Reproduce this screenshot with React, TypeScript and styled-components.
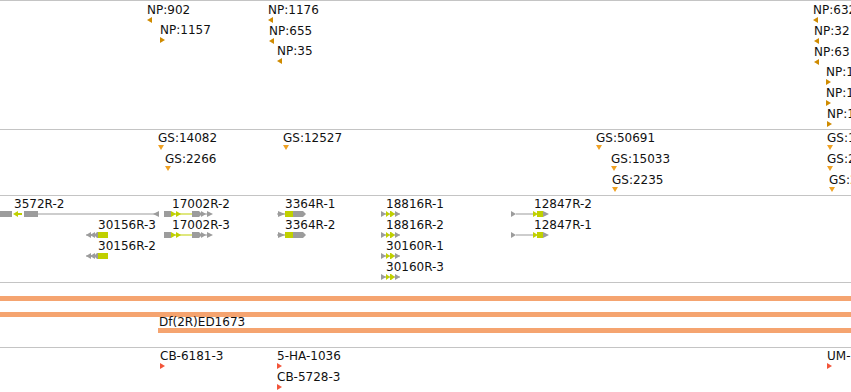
import React from 'react';
import styled, { createGlobalStyle } from 'styled-components';

const GRAY = '#9c9c9c';
const LIME = '#c0d000';
const NP_COLOR = '#cf8b00';
const GS_COLOR = '#f0a224';
const CB_COLOR = '#f2553a';
const BAR_COLOR = '#f5a470';

const GlobalStyle = createGlobalStyle`
  html, body {
    margin: 0;
    padding: 0;
    background: #ffffff;
  }
  body {
    font-family: "DejaVu Sans", "Liberation Sans", sans-serif;
    overflow: hidden;
  }
`;

const Browser = styled.div`
  width: 851px;
  height: 392px;
  overflow: hidden;
  border-top: 1px solid #c4c4c4;
  box-sizing: border-box;
  display: flex;
  flex-direction: column;
`;

const Track = styled.div<{ $h: number }>`
  position: relative;
  flex: none;
  height: ${p => p.$h}px;
  border-bottom: 1px solid #c4c4c4;
  overflow: hidden;
`;

const Feature = styled.div<{ $x: number; $y: number }>`
  position: absolute;
  left: ${p => p.$x}px;
  top: ${p => p.$y}px;
  display: flex;
  flex-direction: column;
  align-items: flex-start;
`;

const Label = styled.div<{ $dx?: number }>`
  margin-left: ${p => p.$dx || 0}px;
  font-size: 12px;
  line-height: 14px;
  color: #111111;
  white-space: nowrap;
`;

const Bar = styled.div<{ $w: number; $gap?: number }>`
  width: ${p => p.$w}px;
  height: 5px;
  margin-top: ${p => p.$gap || 0}px;
  background: ${BAR_COLOR};
`;

type Dir = 'left' | 'right' | 'down';

const Marker = ({ dir, color }: { dir: Dir; color: string }) => {
  if (dir === 'down') {
    return (
      <svg width="6" height="5" style={{ display: 'block' }}>
        <polygon points="0,0 6,0 3,5" fill={color} />
      </svg>
    );
  }
  const pts = dir === 'left' ? '5,0 0,3 5,6' : '0,0 5,3 0,6';
  return (
    <svg width="5" height="6" style={{ display: 'block' }}>
      <polygon points={pts} fill={color} />
    </svg>
  );
};

type Part = { t: 'box' | 'mid' | 'thin' | 'r' | 'l' | 'ra' | 'la'; a: number; b: number; c: string };

const GeneGlyph = ({ w, parts }: { w: number; parts: Part[] }) => (
  <svg width={w} height="6" style={{ display: 'block' }}>
    {parts.map((p, i) => {
      switch (p.t) {
        case 'box':
          return <rect key={i} x={p.a} y={0} width={p.b - p.a} height={6} fill={p.c} />;
        case 'mid':
          return <rect key={i} x={p.a} y={2} width={p.b - p.a} height={2} fill={p.c} />;
        case 'thin':
          return <rect key={i} x={p.a} y={2.5} width={p.b - p.a} height={1} fill={p.c} />;
        case 'r':
          return <polygon key={i} points={`${p.a},0 ${p.b},3 ${p.a},6`} fill={p.c} />;
        case 'l':
          return <polygon key={i} points={`${p.b},0 ${p.a},3 ${p.b},6`} fill={p.c} />;
        case 'ra':
          return <polygon key={i} points={`${p.a},0 ${p.b - 3},0 ${p.b},3 ${p.b - 3},6 ${p.a},6`} fill={p.c} />;
        case 'la':
          return <polygon key={i} points={`${p.a + 3},0 ${p.b},0 ${p.b},6 ${p.a + 3},6 ${p.a},3`} fill={p.c} />;
        default:
          return null;
      }
    })}
  </svg>
);

type Point = { name: string; x: number; y: number; dir: Dir };

const npFeatures: Point[] = [
  { name: 'NP:902', x: 147, y: 2, dir: 'left' },
  { name: 'NP:1157', x: 160, y: 22, dir: 'right' },
  { name: 'NP:1176', x: 268, y: 2, dir: 'left' },
  { name: 'NP:655', x: 269, y: 23, dir: 'left' },
  { name: 'NP:35', x: 277, y: 43, dir: 'left' },
  { name: 'NP:6327', x: 813, y: 2, dir: 'left' },
  { name: 'NP:32', x: 814, y: 23, dir: 'left' },
  { name: 'NP:63', x: 814, y: 44, dir: 'left' },
  { name: 'NP:1048', x: 826, y: 64, dir: 'right' },
  { name: 'NP:1122', x: 826, y: 85, dir: 'right' },
  { name: 'NP:1390', x: 827, y: 106, dir: 'right' },
];

const gsFeatures: Point[] = [
  { name: 'GS:14082', x: 158, y: 1, dir: 'down' },
  { name: 'GS:2266', x: 165, y: 22, dir: 'down' },
  { name: 'GS:12527', x: 283, y: 1, dir: 'down' },
  { name: 'GS:50691', x: 596, y: 1, dir: 'down' },
  { name: 'GS:15033', x: 611, y: 22, dir: 'down' },
  { name: 'GS:2235', x: 612, y: 43, dir: 'down' },
  { name: 'GS:1418', x: 827, y: 1, dir: 'down' },
  { name: 'GS:2071', x: 827, y: 22, dir: 'down' },
  { name: 'GS:2540', x: 829, y: 43, dir: 'down' },
];

const cbFeatures: Point[] = [
  { name: 'CB-6181-3', x: 160, y: 1, dir: 'right' },
  { name: '5-HA-1036', x: 277, y: 1, dir: 'right' },
  { name: 'CB-5728-3', x: 277, y: 22, dir: 'right' },
  { name: 'UM-2168', x: 827, y: 1, dir: 'right' },
];

const G = GRAY;
const Y = LIME;

const glyph3572: Part[] = [
  { t: 'box', a: 0, b: 12, c: G },
  { t: 'mid', a: 16, b: 22, c: Y },
  { t: 'l', a: 13, b: 18, c: Y },
  { t: 'box', a: 24, b: 38, c: G },
  { t: 'thin', a: 38, b: 155, c: G },
  { t: 'l', a: 153, b: 159, c: G },
];

const glyph17002: Part[] = [
  { t: 'box', a: 0, b: 7, c: G },
  { t: 'thin', a: 7, b: 28, c: Y },
  { t: 'r', a: 7, b: 12, c: Y },
  { t: 'r', a: 12, b: 17, c: Y },
  { t: 'ra', a: 28, b: 38, c: G },
  { t: 'thin', a: 37, b: 44, c: G },
  { t: 'r', a: 37, b: 42, c: G },
  { t: 'r', a: 43, b: 49, c: G },
];

const glyph30156: Part[] = [
  { t: 'thin', a: 0, b: 12, c: G },
  { t: 'l', a: 0, b: 5, c: G },
  { t: 'l', a: 4, b: 9, c: G },
  { t: 'la', a: 8, b: 13, c: G },
  { t: 'box', a: 12, b: 22, c: Y },
];

const glyph3364: Part[] = [
  { t: 'thin', a: 0, b: 8, c: G },
  { t: 'r', a: 1, b: 8, c: G },
  { t: 'box', a: 8, b: 16, c: Y },
  { t: 'ra', a: 16, b: 29, c: G },
];

const glyph18816: Part[] = [
  { t: 'thin', a: 0, b: 19, c: G },
  { t: 'r', a: 0, b: 5, c: G },
  { t: 'r', a: 5, b: 9, c: Y },
  { t: 'box', a: 9, b: 10, c: Y },
  { t: 'r', a: 10, b: 14, c: Y },
  { t: 'r', a: 14, b: 19, c: G },
];

const glyph12847: Part[] = [
  { t: 'r', a: 0, b: 5, c: G },
  { t: 'thin', a: 5, b: 24, c: G },
  { t: 'r', a: 22, b: 27, c: Y },
  { t: 'box', a: 26, b: 32, c: Y },
  { t: 'r', a: 32, b: 38, c: G },
];

type Gene = { name: string; x: number; y: number; dx: number; w: number; parts: Part[] };

const genes: Gene[] = [
  { name: '3572R-2', x: 0, y: 1, dx: 14, w: 160, parts: glyph3572 },
  { name: '17002R-2', x: 164, y: 1, dx: 8, w: 49, parts: glyph17002 },
  { name: '17002R-3', x: 164, y: 22, dx: 8, w: 49, parts: glyph17002 },
  { name: '30156R-3', x: 86, y: 22, dx: 12, w: 22, parts: glyph30156 },
  { name: '30156R-2', x: 86, y: 43, dx: 12, w: 22, parts: glyph30156 },
  { name: '3364R-1', x: 277, y: 1, dx: 8, w: 29, parts: glyph3364 },
  { name: '3364R-2', x: 277, y: 22, dx: 8, w: 29, parts: glyph3364 },
  { name: '18816R-1', x: 381, y: 1, dx: 5, w: 19, parts: glyph18816 },
  { name: '18816R-2', x: 381, y: 22, dx: 5, w: 19, parts: glyph18816 },
  { name: '30160R-1', x: 381, y: 43, dx: 5, w: 19, parts: glyph18816 },
  { name: '30160R-3', x: 381, y: 64, dx: 5, w: 19, parts: glyph18816 },
  { name: '12847R-2', x: 511, y: 1, dx: 23, w: 38, parts: glyph12847 },
  { name: '12847R-1', x: 511, y: 22, dx: 23, w: 38, parts: glyph12847 },
];

const PointTrack = ({ h, items, color }: { h: number; items: Point[]; color: string }) => (
  <Track $h={h}>
    {items.map(f => (
      <Feature key={f.name} $x={f.x} $y={f.y}>
        <Label>{f.name}</Label>
        <Marker dir={f.dir} color={color} />
      </Feature>
    ))}
  </Track>
);

export default function App() {
  return (
    <>
      <GlobalStyle />
      <Browser>
        <PointTrack h={128} items={npFeatures} color={NP_COLOR} />
        <PointTrack h={65} items={gsFeatures} color={GS_COLOR} />
        <Track $h={86}>
          {genes.map(g => (
            <Feature key={g.name} $x={g.x} $y={g.y}>
              <Label $dx={g.dx}>{g.name}</Label>
              <GeneGlyph w={g.w} parts={g.parts} />
            </Feature>
          ))}
        </Track>
        <Track $h={64}>
          <Feature $x={0} $y={13}>
            <Bar $w={851} />
          </Feature>
          <Feature $x={0} $y={29}>
            <Bar $w={851} />
          </Feature>
          <Feature $x={158} $y={32}>
            <Label $dx={1}>Df(2R)ED1673</Label>
            <Bar $w={693} $gap={-1} />
          </Feature>
        </Track>
        <PointTrack h={60} items={cbFeatures} color={CB_COLOR} />
      </Browser>
    </>
  );
}
